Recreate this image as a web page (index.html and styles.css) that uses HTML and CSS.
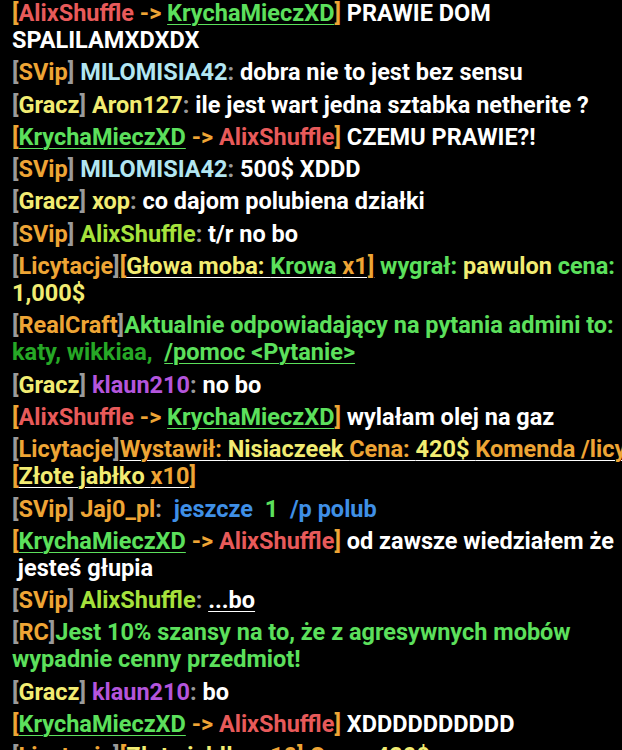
FILE: index.html
```html
<!DOCTYPE html>
<html lang="pl">
<head>
  <meta charset="UTF-8">
  <meta name="viewport" content="width=device-width, initial-scale=1.0">
  <title>Czat</title>
  <link rel="stylesheet" href="styles.css">
</head>
<body>
  <div class="chat">
    <div class="msg"><span class="gold">[</span><span class="red">AlixShuffle</span><span class="gold"> -&gt; </span><span class="green u">KrychaMieczXD</span><span class="gold">]</span> PRAWIE DOM<br>SPALILAMXDXDX</div>
    <div class="msg"><span class="gray">[</span><span class="gold">SVip</span><span class="gray">]</span> <span class="aqua">MILOMISIA42</span><span class="gray">:</span> dobra nie to jest bez sensu</div>
    <div class="msg"><span class="gray">[</span><span class="yellow">Gracz</span><span class="gray">]</span> <span class="yellow">Aron127</span><span class="gray">:</span> ile jest wart jedna sztabka netherite ?</div>
    <div class="msg"><span class="gold">[</span><span class="green u">KrychaMieczXD</span><span class="gold"> -&gt; </span><span class="red">AlixShuffle</span><span class="gold">]</span> CZEMU PRAWIE?!</div>
    <div class="msg"><span class="gray">[</span><span class="gold">SVip</span><span class="gray">]</span> <span class="aqua">MILOMISIA42</span><span class="gray">:</span> 500$ XDDD</div>
    <div class="msg"><span class="gray">[</span><span class="yellow">Gracz</span><span class="gray">]</span> <span class="yellow">xop</span><span class="gray">:</span> co dajom polubiena działki</div>
    <div class="msg"><span class="gray">[</span><span class="gold">SVip</span><span class="gray">]</span> <span class="lime">AlixShuffle</span><span class="gray">:</span> t/r no bo</div>
    <div class="msg"><span class="gray">[</span><span class="gold">Licytacje</span><span class="gray">]</span><span class="u"><span class="gold">[</span><span class="yellow">Głowa moba: </span><span class="green">Krowa </span><span class="gold">x1]</span></span><span class="green"> wygrał: </span><span class="yellow">pawulon</span><span class="green"> cena:</span><br><span class="yellow">1,000$</span></div>
    <div class="msg"><span class="gray">[</span><span class="gold">RealCraft</span><span class="gray">]</span><span class="green">Aktualnie odpowiadający na pytania admini to:</span><br><span class="dgreen">katy, wikkiaa, </span> <span class="green u">/pomoc &lt;Pytanie&gt;</span></div>
    <div class="msg"><span class="gray">[</span><span class="yellow">Gracz</span><span class="gray">]</span> <span class="purple">klaun210</span><span class="gray">:</span> no bo</div>
    <div class="msg"><span class="gold">[</span><span class="red">AlixShuffle</span><span class="gold"> -&gt; </span><span class="green u">KrychaMieczXD</span><span class="gold">]</span> wylałam olej na gaz</div>
    <div class="msg"><span class="gray">[</span><span class="gold">Licytacje</span><span class="gray">]</span><span class="u"><span class="gold">Wystawił: </span><span class="yellow">Nisiaczeek </span><span class="gold">Cena: </span><span class="yellow">420$ </span><span class="gold">Komenda /licytacje</span></span><br><span class="u"><span class="gold">[</span><span class="yellow">Złote jabłko </span><span class="gold">x10]</span></span></div>
    <div class="msg"><span class="gray">[</span><span class="gold">SVip</span><span class="gray">]</span> <span class="gold">Jaj0_pl</span><span class="gray">:</span>  <span class="blue">jeszcze</span>  <span class="green">1</span>  <span class="blue">/p polub</span></div>
    <div class="msg"><span class="gold">[</span><span class="green u">KrychaMieczXD</span><span class="gold"> -&gt; </span><span class="red">AlixShuffle</span><span class="gold">]</span> od zawsze wiedziałem że<br> jesteś głupia</div>
    <div class="msg"><span class="gray">[</span><span class="gold">SVip</span><span class="gray">]</span> <span class="lime">AlixShuffle</span><span class="gray">:</span> <span class="u">...bo</span></div>
    <div class="msg"><span class="gray">[</span><span class="gold">RC</span><span class="gray">]</span><span class="green">Jest 10% szansy na to, że z agresywnych mobów<br>wypadnie cenny przedmiot!</span></div>
    <div class="msg"><span class="gray">[</span><span class="yellow">Gracz</span><span class="gray">]</span> <span class="purple">klaun210</span><span class="gray">:</span> bo</div>
    <div class="msg"><span class="gold">[</span><span class="green u">KrychaMieczXD</span><span class="gold"> -&gt; </span><span class="red">AlixShuffle</span><span class="gold">]</span> XDDDDDDDDDD</div>
    <div class="msg"><span class="gray">[</span><span class="gold">Licytacje</span><span class="gray">]</span><span class="u"><span class="gold">[</span><span class="yellow">Złote jabłko </span><span class="gold">x10]</span></span><span class="gold"> Cena: </span><span class="yellow">420$</span></div>
  </div>
</body>
</html>
```

FILE: styles.css
```css
html, body {
  margin: 0;
  background: #000;
  height: 100%;
  overflow: hidden;
}
.chat {
  padding: 0 0 0 12px;
  font-family: Roboto, 'Noto Sans', sans-serif;
  font-weight: 700;
  font-size: 23.5px;
  color: #fff;
}
.msg {
  line-height: 27px;
  margin-bottom: 5.3px;
  white-space: pre;
}
.u {
  text-decoration: underline;
  text-decoration-thickness: 1px;
  text-underline-offset: 3px;
}
.gray { color: #9a9a9a; }
.gold { color: #eea535; }
.red { color: #e85a5a; }
.green { color: #5ce05c; }
.dgreen { color: #26a826; }
.lime { color: #a6e23c; }
.aqua { color: #b2e6f2; }
.yellow { color: #f2ec72; }
.purple { color: #b455dc; }
.blue { color: #3f8fe6; }
```
